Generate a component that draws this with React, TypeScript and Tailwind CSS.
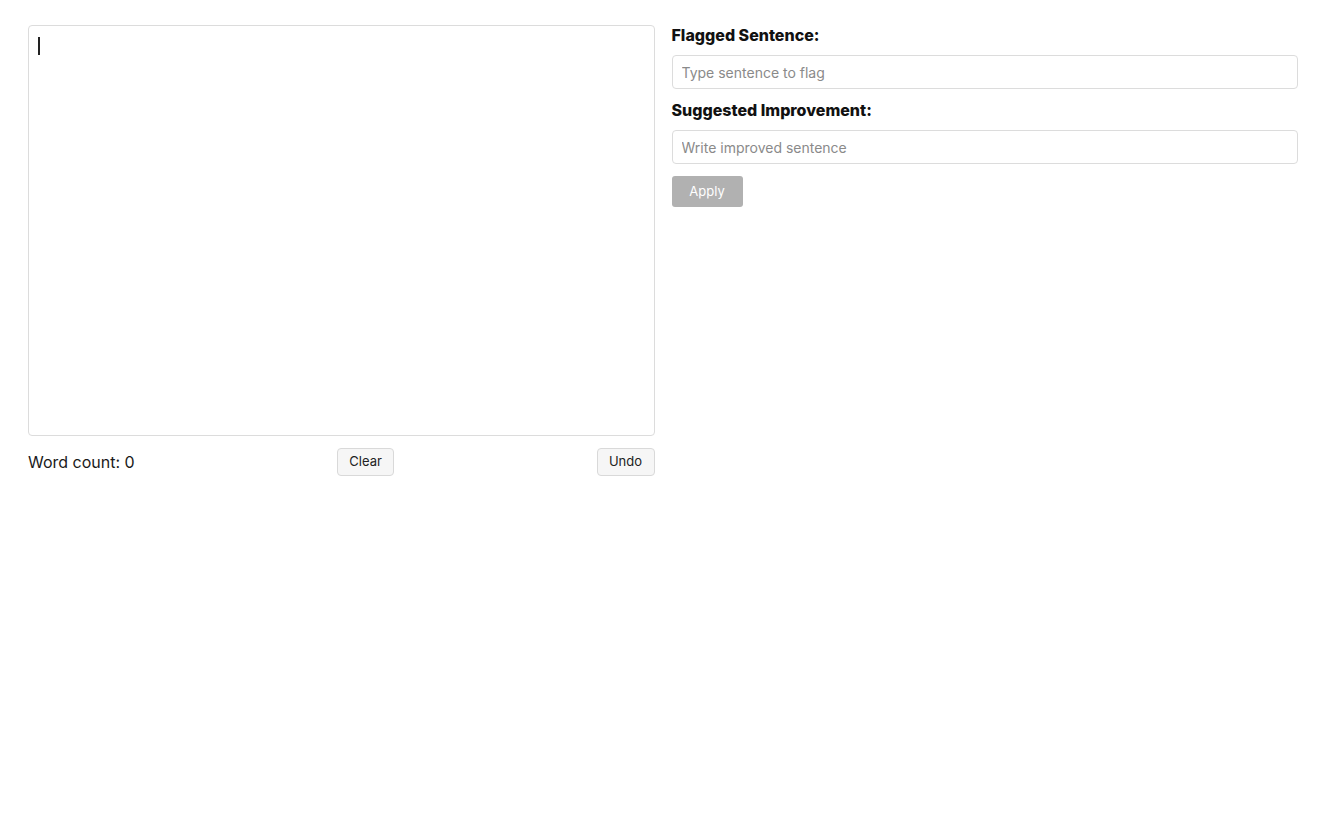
import { useState } from "react";

export default function App() {
  const [text, setText] = useState("");
  const [flagged, setFlagged] = useState("");
  const [improved, setImproved] = useState("");

  const words = text.trim() ? text.trim().split(/\s+/).length : 0;
  const canApply = flagged.trim() !== "" && improved.trim() !== "";

  return (
    <div
      className="min-h-screen bg-white text-[#1a1a1a] px-[28px] pt-[25px]"
      style={{ fontFamily: 'Inter, "Liberation Sans", Arial, sans-serif' }}
    >
      <div className="grid grid-cols-2 gap-[17px]">
        {/* Editor */}
        <div className="flex flex-col">
          <div className="relative">
            <textarea
              autoFocus
              value={text}
              onChange={(e) => setText(e.target.value)}
              className="block h-[411px] w-full resize-none rounded-[4px] border border-[#dcdcdc] px-[10px] py-[10px] text-[15px] outline-none"
            />
            {text === "" && (
              <span className="pointer-events-none absolute left-[10px] top-[12px] h-[18px] w-[1.5px] bg-[#222]" />
            )}
          </div>
          <div className="mt-[12px] flex items-center justify-between">
            <span className="text-[16px]">Word count: {words}</span>
            <button
              onClick={() => setText("")}
              className="h-[28px] w-[57px] rounded-[4px] border border-[#d9d9d9] bg-[#f6f6f6] text-[13px] text-[#222]"
            >
              Clear
            </button>
            <button className="h-[28px] w-[58px] rounded-[4px] border border-[#d9d9d9] bg-[#f6f6f6] text-[13px] text-[#222]">
              Undo
            </button>
          </div>
        </div>

        {/* Suggestion panel */}
        <div className="flex flex-col">
          <h3 className="text-[16px] font-extrabold leading-[20px] text-[#111]">
            Flagged Sentence:
          </h3>
          <input
            value={flagged}
            onChange={(e) => setFlagged(e.target.value)}
            placeholder="Type sentence to flag"
            className="mt-[10px] h-[34px] w-full rounded-[4px] border border-[#dcdcdc] px-[9px] text-[14px] outline-none placeholder:text-[#8a8a8a]"
          />
          <h3 className="mt-[11px] text-[16px] font-extrabold leading-[20px] text-[#111]">
            Suggested Improvement:
          </h3>
          <input
            value={improved}
            onChange={(e) => setImproved(e.target.value)}
            placeholder="Write improved sentence"
            className="mt-[10px] h-[34px] w-full rounded-[4px] border border-[#dcdcdc] px-[9px] text-[14px] outline-none placeholder:text-[#8a8a8a]"
          />
          <div className="mt-[12px]">
            <button
              disabled={!canApply}
              className="h-[31px] w-[71px] rounded-[3px] bg-[#b1b1b1] text-[13px] text-white"
            >
              Apply
            </button>
          </div>
        </div>
      </div>
    </div>
  );
}
